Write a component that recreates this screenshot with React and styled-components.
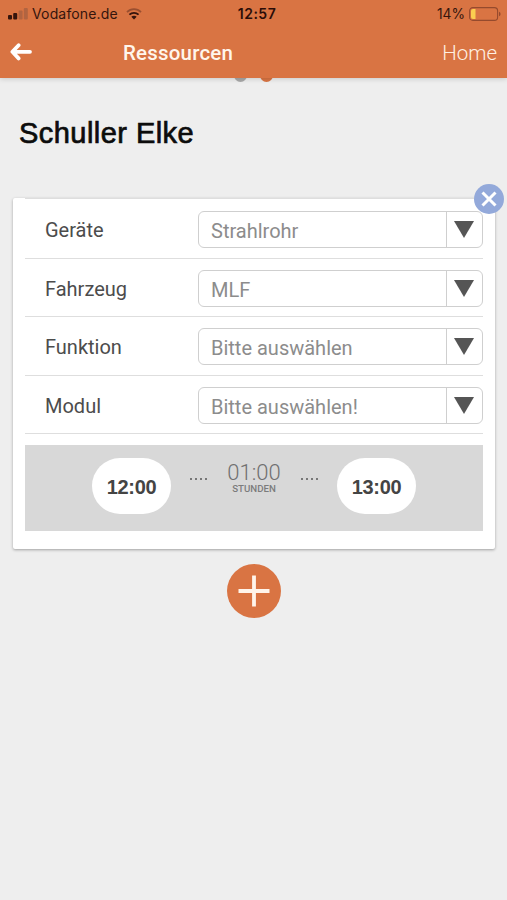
import React, { useState } from 'react'
import styled, { createGlobalStyle } from 'styled-components'

const GlobalStyle=createGlobalStyle`
*{
    box-sizing:border-box;
}
body{
    margin:0;
    background:#eeeeee;
    font-family:Roboto, 'Liberation Sans', sans-serif;
}
button{
    border:none;
    background:none;
    padding:0;
    font-family:inherit;
    cursor:pointer;
}
`
const Page=styled.div`
display:flex;
flex-direction:column;
height:900px;
overflow:hidden;
`
const Header=styled.header`
position:relative;
z-index:1;
height:78px;
background:#d97443;
box-shadow:0 1px 5px rgba(0,0,0,0.16);
`
const StatusBar=styled.div`
display:grid;
grid-template-columns:1fr auto 1fr;
align-items:center;
height:27px;
padding:0 6px 0 8px;
font-family:Inter, 'Liberation Sans', sans-serif;
font-size:13.8px;
color:#35150d;
`
const StatusGroup=styled.div`
display:flex;
align-items:center;
justify-content:${(props) => (props.$end ? "flex-end" : "flex-start")};
gap:${(props) => (props.$end ? "4px" : "0")};
`
const Carrier=styled.span`
margin:0 8px 0 4px;
font-size:14px;
letter-spacing:0.15px;
`
const Clock=styled.span`
margin-left:5px;
font-weight:600;
font-size:14px;
letter-spacing:0.5px;
color:#2b0d08;
`
const NavBar=styled.nav`
display:flex;
align-items:center;
height:50px;
padding:0 10px;
`
const BackButton=styled.button`
display:flex;
width:113px;
`
const Title=styled.h1`
flex:1;
margin:0;
padding-top:1px;
font-size:20.5px;
font-weight:500;
letter-spacing:0.2px;
line-height:24px;
color:#fff6ec;
`
const HomeButton=styled.button`
padding-top:1px;
font-size:20.5px;
font-weight:300;
line-height:24px;
color:#fff0e2;
`
const Dots=styled.div`
display:flex;
justify-content:center;
gap:13px;
height:13px;
margin-top:-9px;
`
const Dot=styled.span`
width:13px;
height:13px;
border-radius:50%;
background:${(props) => (props.$active ? "#d97443" : "#a9a9a9")};
`
const Name=styled.h2`
margin:33px 0 0 19px;
font-family:'Liberation Sans', sans-serif;
font-size:29px;
font-weight:400;
letter-spacing:0.45px;
line-height:36px;
color:#0c0c0c;
-webkit-text-stroke:0.7px #0c0c0c;
`
const Card=styled.section`
position:relative;
display:flex;
flex-direction:column;
flex:none;
height:351px;
margin:47px 12px 0 13px;
padding:0 12px;
background:#ffffff;
border-radius:2px;
box-shadow:0 1px 3px rgba(0,0,0,0.33);
`
const CloseButton=styled.button`
position:absolute;
top:-14px;
right:-9px;
display:flex;
align-items:center;
justify-content:center;
width:30px;
height:30px;
border-radius:50%;
background:#93a9da;
`
const Row=styled.div`
display:flex;
align-items:center;
height:58.6px;
padding:2px 0 0 20px;
border-bottom:1px solid #dedede;
&:first-of-type{
    border-top:1px solid #dedede;
    height:60.6px;
}
`
const Label=styled.label`
width:153px;
padding-top:1px;
font-size:20px;
line-height:24px;
color:#4c4c4c;
`
const Select=styled.button`
display:flex;
flex:1;
height:37px;
border:1px solid #cfcfcf;
border-radius:6px;
background:#ffffff;
`
const Value=styled.span`
flex:1;
padding:7px 0 0 12px;
text-align:left;
font-size:20px;
line-height:24px;
color:#8c8c8c;
`
const Arrow=styled.span`
display:flex;
align-items:center;
justify-content:center;
width:36px;
height:100%;
padding-right:2px;
border-left:1px solid #cfcfcf;
`
const TimeBar=styled.div`
display:flex;
justify-content:center;
height:86px;
margin-top:11px;
padding-top:13px;
background:#d8d8d8;
`
const TimeButton=styled.button`
width:79px;
height:56px;
padding-top:3px;
border-radius:28px;
background:#ffffff;
font-family:'Liberation Sans', sans-serif;
font-size:20px;
font-weight:700;
letter-spacing:-0.35px;
color:#444444;
`
const DotLine=styled.span`
display:flex;
gap:3px;
margin:20px 19px 0;
& i{
    width:2px;
    height:2px;
    background:#777777;
}
`
const Duration=styled.div`
display:flex;
flex-direction:column;
align-items:center;
width:56px;
padding-top:4px;
font-size:22px;
font-weight:300;
line-height:22px;
color:#707070;
& small{
    font-size:9.7px;
    font-weight:500;
    line-height:10px;
    color:#7c7c7c;
}
`
const AddButton=styled.button`
display:flex;
align-items:center;
justify-content:center;
align-self:center;
width:54px;
height:54px;
margin-top:15px;
border-radius:50%;
background:#d97443;
`

const fields=[
    {id:"geraete",label:"Geräte",value:"Strahlrohr"},
    {id:"fahrzeug",label:"Fahrzeug",value:"MLF"},
    {id:"funktion",label:"Funktion",value:"Bitte auswählen"},
    {id:"modul",label:"Modul",value:"Bitte auswählen!"},
]

const SignalIcon = () => (
  <svg width="20" height="12" viewBox="0 0 20 12">
    <rect x="0" y="7" width="4" height="4.5" rx="1" fill="#35150d"/>
    <rect x="5.2" y="5" width="4" height="6.5" rx="1" fill="#35150d"/>
    <rect x="10.6" y="2.5" width="4" height="9" rx="1" fill="#b16441"/>
    <rect x="15.8" y="0" width="4" height="11.5" rx="1" fill="#b16441"/>
  </svg>
)

const WifiIcon = () => (
  <svg width="16" height="12" viewBox="0 0 16 12" fill="none" strokeWidth="1.8">
    <path d="M1 4.2C5 0.2 11 0.2 15 4.2" stroke="#9a4f30"/>
    <path d="M3.4 6.7C6 4.2 10 4.2 12.6 6.7" stroke="#35150d"/>
    <path d="M5.3 8.8C6.8 7.5 9.2 7.5 10.7 8.8L8 11.5Z" fill="#35150d"/>
  </svg>
)

const BatteryIcon = () => (
  <svg width="32" height="14" viewBox="0 0 32 14">
    <rect x="0.6" y="0.6" width="28" height="12.8" rx="3.2" fill="none" stroke="#954a2d" strokeWidth="1.1"/>
    <path d="M4 2H6.5V12H4Q2 12 2 10V4Q2 2 4 2Z" fill="#fbce50"/>
    <path d="M30 4.8Q31.6 5.2 31.6 7T30 9.2Z" fill="#954a2d"/>
  </svg>
)

const BackIcon = () => (
  <svg width="22" height="18" viewBox="0 0 22 18" fill="none" stroke="#ffffff" strokeWidth="3.8" strokeLinecap="round" strokeLinejoin="round">
    <path d="M8.6 2.2L2.4 8.8L8.6 15.4M3 8.8H20"/>
  </svg>
)

const ResourceRow = (props) => (
  <Row>
    <Label htmlFor={props.id}>{props.label}</Label>
    <Select id={props.id}>
      <Value>{props.value}</Value>
      <Arrow>
        <svg width="20" height="17" viewBox="0 0 20 17"><path d="M0 0H20L10 17Z" fill="#555555"/></svg>
      </Arrow>
    </Select>
  </Row>
)

const Dotted = () => (
  <DotLine><i/><i/><i/><i/></DotLine>
)

function App() {
    const [isCardVisible,setIsCardVisible]=useState(true);
  return (
    <Page>
      <GlobalStyle/>
      <Header>
        <StatusBar>
          <StatusGroup>
            <SignalIcon/>
            <Carrier>Vodafone.de</Carrier>
            <WifiIcon/>
          </StatusGroup>
          <Clock>12:57</Clock>
          <StatusGroup $end>
            <span>14%</span>
            <BatteryIcon/>
          </StatusGroup>
        </StatusBar>
        <NavBar>
          <BackButton aria-label="Zurück"><BackIcon/></BackButton>
          <Title>Ressourcen</Title>
          <HomeButton>Home</HomeButton>
        </NavBar>
      </Header>
      <Dots>
        <Dot/>
        <Dot $active/>
      </Dots>
      <Name>Schuller Elke</Name>
      {isCardVisible&&<Card>
        {fields.map((field)=><ResourceRow key={field.id} {...field}/>)}
        <TimeBar>
          <TimeButton>12:00</TimeButton>
          <Dotted/>
          <Duration>01:00<small>STUNDEN</small></Duration>
          <Dotted/>
          <TimeButton>13:00</TimeButton>
        </TimeBar>
        <CloseButton aria-label="Entfernen" onClick={()=>setIsCardVisible(false)}>
          <svg width="16" height="16" viewBox="0 0 16 16" stroke="#ffffff" strokeWidth="3"><path d="M1.5 1.5L14.5 14.5M14.5 1.5L1.5 14.5"/></svg>
        </CloseButton>
      </Card>}
      <AddButton aria-label="Hinzufügen" onClick={()=>setIsCardVisible(true)}>
        <svg width="32" height="32" viewBox="0 0 32 32" stroke="#fff4ea" strokeWidth="3.8"><path d="M16 0.5V31.5M0.5 16H31.5"/></svg>
      </AddButton>
    </Page>
  )
}

export default App
